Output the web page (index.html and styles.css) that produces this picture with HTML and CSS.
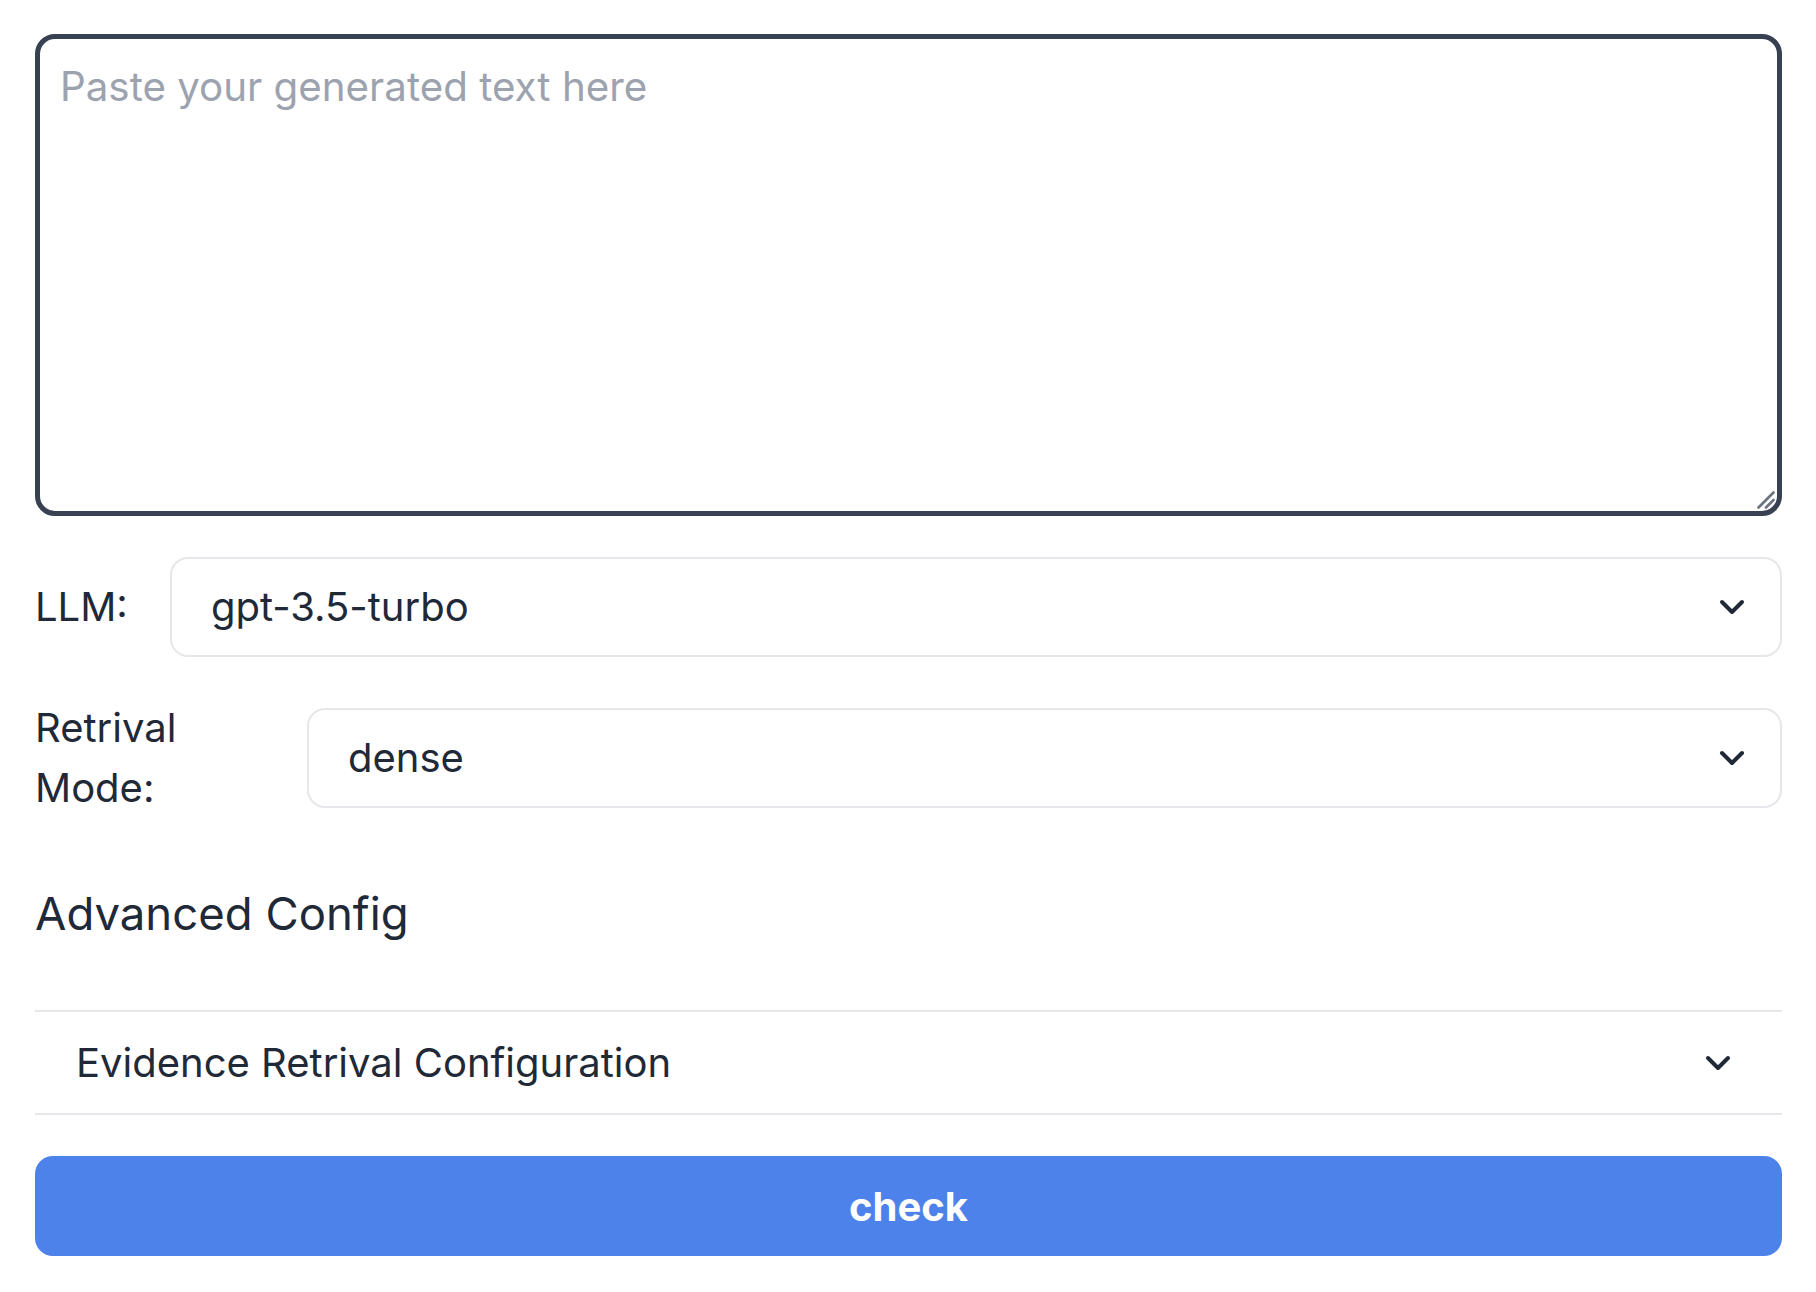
FILE: index.html
```html
<!DOCTYPE html>
<html lang="en">
<head>
<meta charset="utf-8">
<title>Check</title>
<link rel="stylesheet" href="styles.css">
</head>
<body>
<main class="page">
  <div class="text-wrap">
    <textarea class="text-input" placeholder="Paste your generated text here"></textarea>
    <svg class="grip" width="18" height="18" viewBox="0 0 18 18" aria-hidden="true">
      <line x1="1.5" y1="16.5" x2="16.5" y2="1.5"/>
      <line x1="9" y1="16.5" x2="16.5" y2="9"/>
    </svg>
  </div>

  <div class="field-row">
    <label class="field-label label-llm">LLM:</label>
    <div class="select">
      <span class="select-value">gpt-3.5-turbo</span>
      <svg class="chev" width="26" height="16" viewBox="0 0 26 16" aria-hidden="true"><path d="M3 3 L13 13 L23 3"/></svg>
    </div>
  </div>

  <div class="field-row">
    <label class="field-label label-mode">Retrival Mode:</label>
    <div class="select">
      <span class="select-value">dense</span>
      <svg class="chev" width="26" height="16" viewBox="0 0 26 16" aria-hidden="true"><path d="M3 3 L13 13 L23 3"/></svg>
    </div>
  </div>

  <div class="heading-block">
    <h2 class="heading">Advanced Config</h2>
  </div>

  <div class="accordion">
    <span class="accordion-title">Evidence Retrival Configuration</span>
    <svg class="chev" width="26" height="16" viewBox="0 0 26 16" aria-hidden="true"><path d="M3 3 L13 13 L23 3"/></svg>
  </div>

  <button class="check-btn" type="button">check</button>
</main>
</body>
</html>
```

FILE: styles.css
```css
* {
  box-sizing: border-box;
}

html, body {
  margin: 0;
  padding: 0;
  background: #ffffff;
}

body {
  font-family: Inter, "Noto Sans", "Liberation Sans", sans-serif;
  color: #1f2937;
}

.page {
  width: 1816px;
  padding: 34px 34px 34px 35px;
  display: flex;
  flex-direction: column;
  gap: 41px;
}

.text-wrap {
  position: relative;
  height: 482px;
}

.text-input {
  display: block;
  width: 100%;
  height: 100%;
  border: 5px solid #374151;
  border-radius: 20px;
  padding: 18px 20px;
  font-family: Inter, "Noto Sans", "Liberation Sans", sans-serif;
  font-size: 40.3px;
  line-height: 60px;
  color: #1f2937;
  background: #ffffff;
  resize: none;
  outline: none;
}

.text-input::placeholder {
  color: #9ca3af;
}

.grip {
  position: absolute;
  right: 7px;
  bottom: 7px;
}

.grip line {
  stroke: #6b7280;
  stroke-width: 2.6;
  stroke-linecap: round;
}

.field-row {
  display: flex;
  align-items: center;
  gap: 45px;
}

.field-label {
  flex: none;
  font-size: 40px;
  line-height: 60px;
  color: #1f2937;
}

.label-llm {
  width: 90px;
}

.label-mode {
  width: 227px;
}

.select {
  flex: 1;
  height: 100px;
  border: 2px solid #e5e7eb;
  border-radius: 18px;
  padding: 0 35px 0 39px;
  display: flex;
  align-items: center;
  justify-content: space-between;
  background: #ffffff;
}

.select-value {
  font-size: 40px;
  line-height: 60px;
  color: #1f2937;
}

.chev {
  flex: none;
}

.chev path {
  fill: none;
  stroke: #1f2937;
  stroke-width: 4;
  stroke-linecap: round;
  stroke-linejoin: round;
}

.heading-block {
  padding: 27px 0;
}

.heading {
  margin: 0;
  font-size: 45.5px;
  line-height: 56px;
  font-weight: 400;
  color: #1f2937;
}

.accordion {
  height: 105px;
  border-top: 2px solid #e5e7eb;
  border-bottom: 2px solid #e5e7eb;
  padding: 0 51px 0 41px;
  display: flex;
  align-items: center;
  justify-content: space-between;
}

.accordion-title {
  font-size: 40px;
  line-height: 60px;
  color: #1f2937;
}

.check-btn {
  display: block;
  width: 100%;
  height: 100px;
  border: none;
  border-radius: 18px;
  background: #4e82eb;
  color: #ffffff;
  font-family: Inter, "Noto Sans", "Liberation Sans", sans-serif;
  font-size: 40px;
  font-weight: 700;
  cursor: pointer;
}
```
